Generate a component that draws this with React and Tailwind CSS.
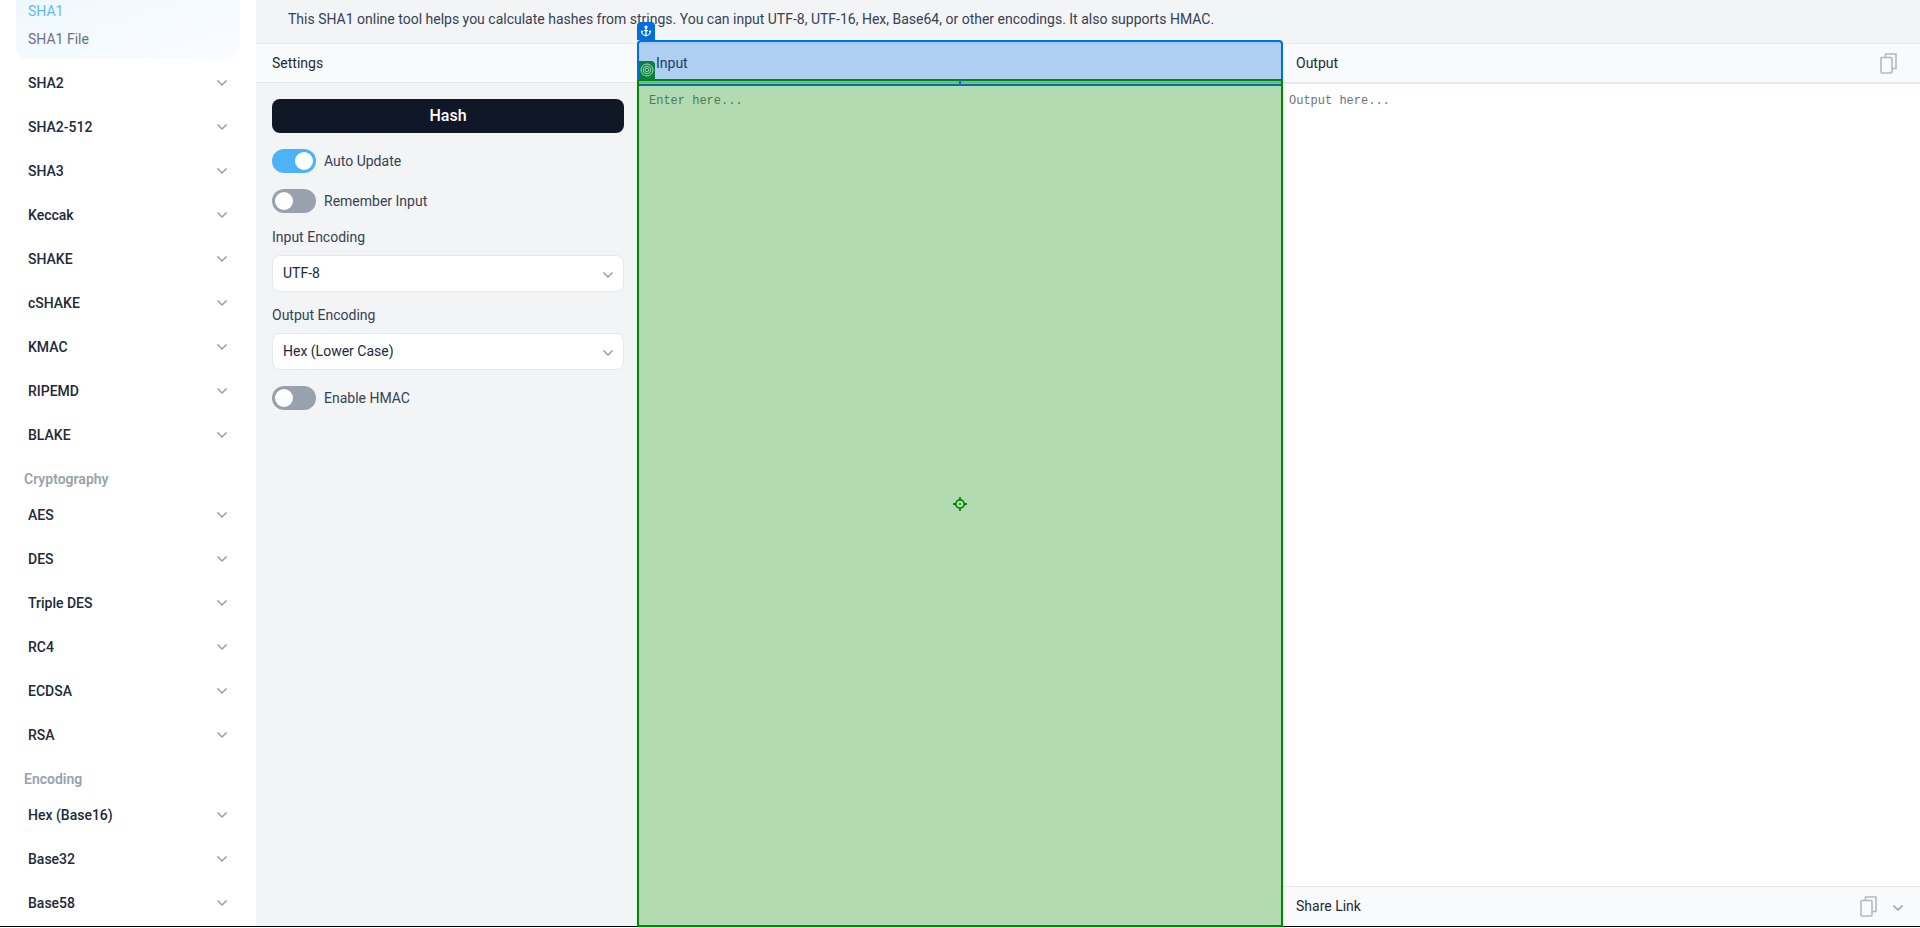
import { Anchor, ChevronDown } from 'lucide-react';

const font = { fontFamily: 'Roboto, sans-serif' };

const hashItems = ['SHA2', 'SHA2-512', 'SHA3', 'Keccak', 'SHAKE', 'cSHAKE', 'KMAC', 'RIPEMD', 'BLAKE'];
const cryptoItems = ['AES', 'DES', 'Triple DES', 'RC4', 'ECDSA', 'RSA'];
const encodingItems = ['Hex (Base16)', 'Base32', 'Base58'];

function NavRow({ label }) {
  return (
    <div className="flex h-[44px] shrink-0 items-center justify-between pl-[28px] pr-[26px]">
      <span className="text-[14px] font-medium text-gray-800">{label}</span>
      <ChevronDown size={16} strokeWidth={2.5} className="text-gray-400" />
    </div>
  );
}

function NavGroup({ label }) {
  return (
    <div className="flex h-[36px] shrink-0 items-center pl-[24px] pt-[8px] text-[14px] font-semibold text-gray-400">{label}</div>
  );
}

function Toggle({ on, label }) {
  return (
    <div className="flex items-center gap-2">
      <div className={`flex h-6 w-11 items-center rounded-full px-[3px] ${on ? 'justify-end bg-[#4db3f8]' : 'justify-start bg-gray-400'}`}>
        <div className="h-[18px] w-[18px] rounded-full bg-white" />
      </div>
      <span className="text-[14px] text-gray-700">{label}</span>
    </div>
  );
}

function SelectBox({ value }) {
  return (
    <div className="flex h-[37px] items-center justify-between rounded-lg border border-gray-200 bg-white pl-[10px] pr-[7px]">
      <span className="text-[14px] text-gray-800">{value}</span>
      <ChevronDown size={16} strokeWidth={2.5} className="mt-[2px] text-gray-400" />
    </div>
  );
}

function CopyIcon() {
  return (
    <svg width="17" height="21" viewBox="0 0 17 21" fill="none" stroke="#b4b8c0" strokeWidth="1.6">
      <path d="M5.5 4V1h10.5v14.5H12.5" />
      <rect x="1" y="4.5" width="11" height="15.5" rx="1" />
    </svg>
  );
}

export default function App() {
  return (
    <div className="relative h-[928px] w-full overflow-hidden bg-white" style={font}>
      <div className="flex h-[926px]">
        {/* Sidebar */}
        <aside className="flex w-64 shrink-0 flex-col overflow-hidden bg-white">
          <div className="mx-4 -mt-[11px] mb-[2px] flex shrink-0 flex-col rounded-xl bg-gradient-to-br from-[#eef7fe] to-[#fafcff] pb-[6px] pl-3 pt-2 text-[14px]">
            <div className="flex h-[28px] items-center text-[#63b6f6]">SHA1</div>
            <div className="flex h-[28px] items-center text-gray-500">SHA1 File</div>
          </div>
          {hashItems.map((item) => <NavRow key={item} label={item} />)}
          <NavGroup label="Cryptography" />
          {cryptoItems.map((item) => <NavRow key={item} label={item} />)}
          <NavGroup label="Encoding" />
          {encodingItems.map((item) => <NavRow key={item} label={item} />)}
        </aside>

        {/* Main */}
        <main className="flex min-w-0 flex-1 flex-col bg-gray-100">
          <div className="flex h-[44px] shrink-0 items-center border-b border-gray-200 pb-[4px] pl-[32px] text-[14px] text-gray-700">
            This SHA1 online tool helps you calculate hashes from strings. You can input UTF-8, UTF-16, Hex, Base64, or other encodings. It also supports HMAC.
          </div>
          <div className="flex min-h-0 flex-1">
            {/* Settings */}
            <section className="flex w-[384px] shrink-0 flex-col">
              <div className="flex h-[39px] items-center border-b border-gray-200 bg-gray-50 px-4 text-[14px] text-gray-800">Settings</div>
              <div className="flex flex-col px-4 pt-4">
                <button className="h-[34px] rounded-lg bg-gray-900 text-[16px] font-medium text-white">Hash</button>
                <div className="mt-4"><Toggle on label="Auto Update" /></div>
                <div className="mt-4"><Toggle label="Remember Input" /></div>
                <div className="mb-2 mt-[14px] text-[14px] leading-[20px] text-gray-700">Input Encoding</div>
                <SelectBox value="UTF-8" />
                <div className="mb-2 mt-[13px] text-[14px] leading-[20px] text-gray-700">Output Encoding</div>
                <SelectBox value="Hex (Lower Case)" />
                <div className="mt-4"><Toggle label="Enable HMAC" /></div>
              </div>
            </section>

            {/* Input */}
            <section className="flex w-[640px] shrink-0 flex-col bg-white">
              <div className="flex h-[39px] items-center border-b border-gray-200 bg-gray-50 px-4 text-[14px] text-gray-800">Input</div>
              <div className="flex-1 px-[9px] pt-[9px] text-[12px] leading-[18px] text-gray-500" style={{ fontFamily: '"Liberation Mono", monospace' }}>Enter here...</div>
            </section>

            {/* Output */}
            <section className="flex min-w-0 flex-1 flex-col bg-white">
              <div className="flex h-[40px] items-center justify-between border-b-2 border-gray-200 bg-gray-50 pl-4 pr-[23px] text-[14px] text-gray-800">
                <span>Output</span>
                <CopyIcon />
              </div>
              <div className="flex-1 pl-[9px] pt-[8px] text-[12px] leading-[18px] text-gray-500" style={{ fontFamily: '"Liberation Mono", monospace' }}>Output here...</div>
              <div className="flex h-[40px] shrink-0 items-center justify-between border-t border-gray-200 bg-gray-50 pl-4 pr-[14px] text-[14px] text-gray-800">
                <span>Share Link</span>
                <div className="flex items-center gap-[13px]">
                  <CopyIcon />
                  <ChevronDown size={16} strokeWidth={2.5} className="mt-[2px] text-gray-400" />
                </div>
              </div>
            </section>
          </div>
        </main>
      </div>
      <div className="h-[1px] bg-black" />

      {/* Element inspector highlight laid over the input panel */}
      <div className="absolute left-[637px] top-[40px] h-[46px] w-[646px] rounded-t-[4px] border-2 border-[#006edc] bg-[#006edc]/30" />
      <div className="absolute left-[637px] top-[79px] h-[848px] w-[646px] border-2 border-[#008a00] bg-[#008a00]/30" />
      <div className="absolute left-[959px] top-[79px] h-[7px] w-[2px] bg-[#006edc]" />
      <div className="absolute left-[637px] top-[22px] flex h-[18px] w-[18px] items-center justify-center rounded-t-[4px] bg-[#006edc] text-white">
        <Anchor size={12} strokeWidth={2.5} />
      </div>
      <div className="absolute left-[639px] top-[61px] flex h-[18px] w-[16px] items-center justify-center rounded-tr-[4px] bg-[#0b8043]">
        <svg width="14" height="14" viewBox="0 0 14 14" fill="none" stroke="#a8d8b8" strokeWidth="1">
          <circle cx="7" cy="7" r="6" />
          <circle cx="7" cy="7" r="3.8" />
          <circle cx="7" cy="7" r="1.8" />
        </svg>
      </div>
      <svg className="absolute left-[953px] top-[497px]" width="14" height="14" viewBox="0 0 14 14" fill="none" stroke="#008a00" strokeWidth="1.8">
        <circle cx="7" cy="7" r="4.2" />
        <path d="M7 0v3M7 11v3M0 7h3M11 7h3" />
        <circle cx="7" cy="7" r="1" fill="#008a00" stroke="none" />
      </svg>
    </div>
  );
}
